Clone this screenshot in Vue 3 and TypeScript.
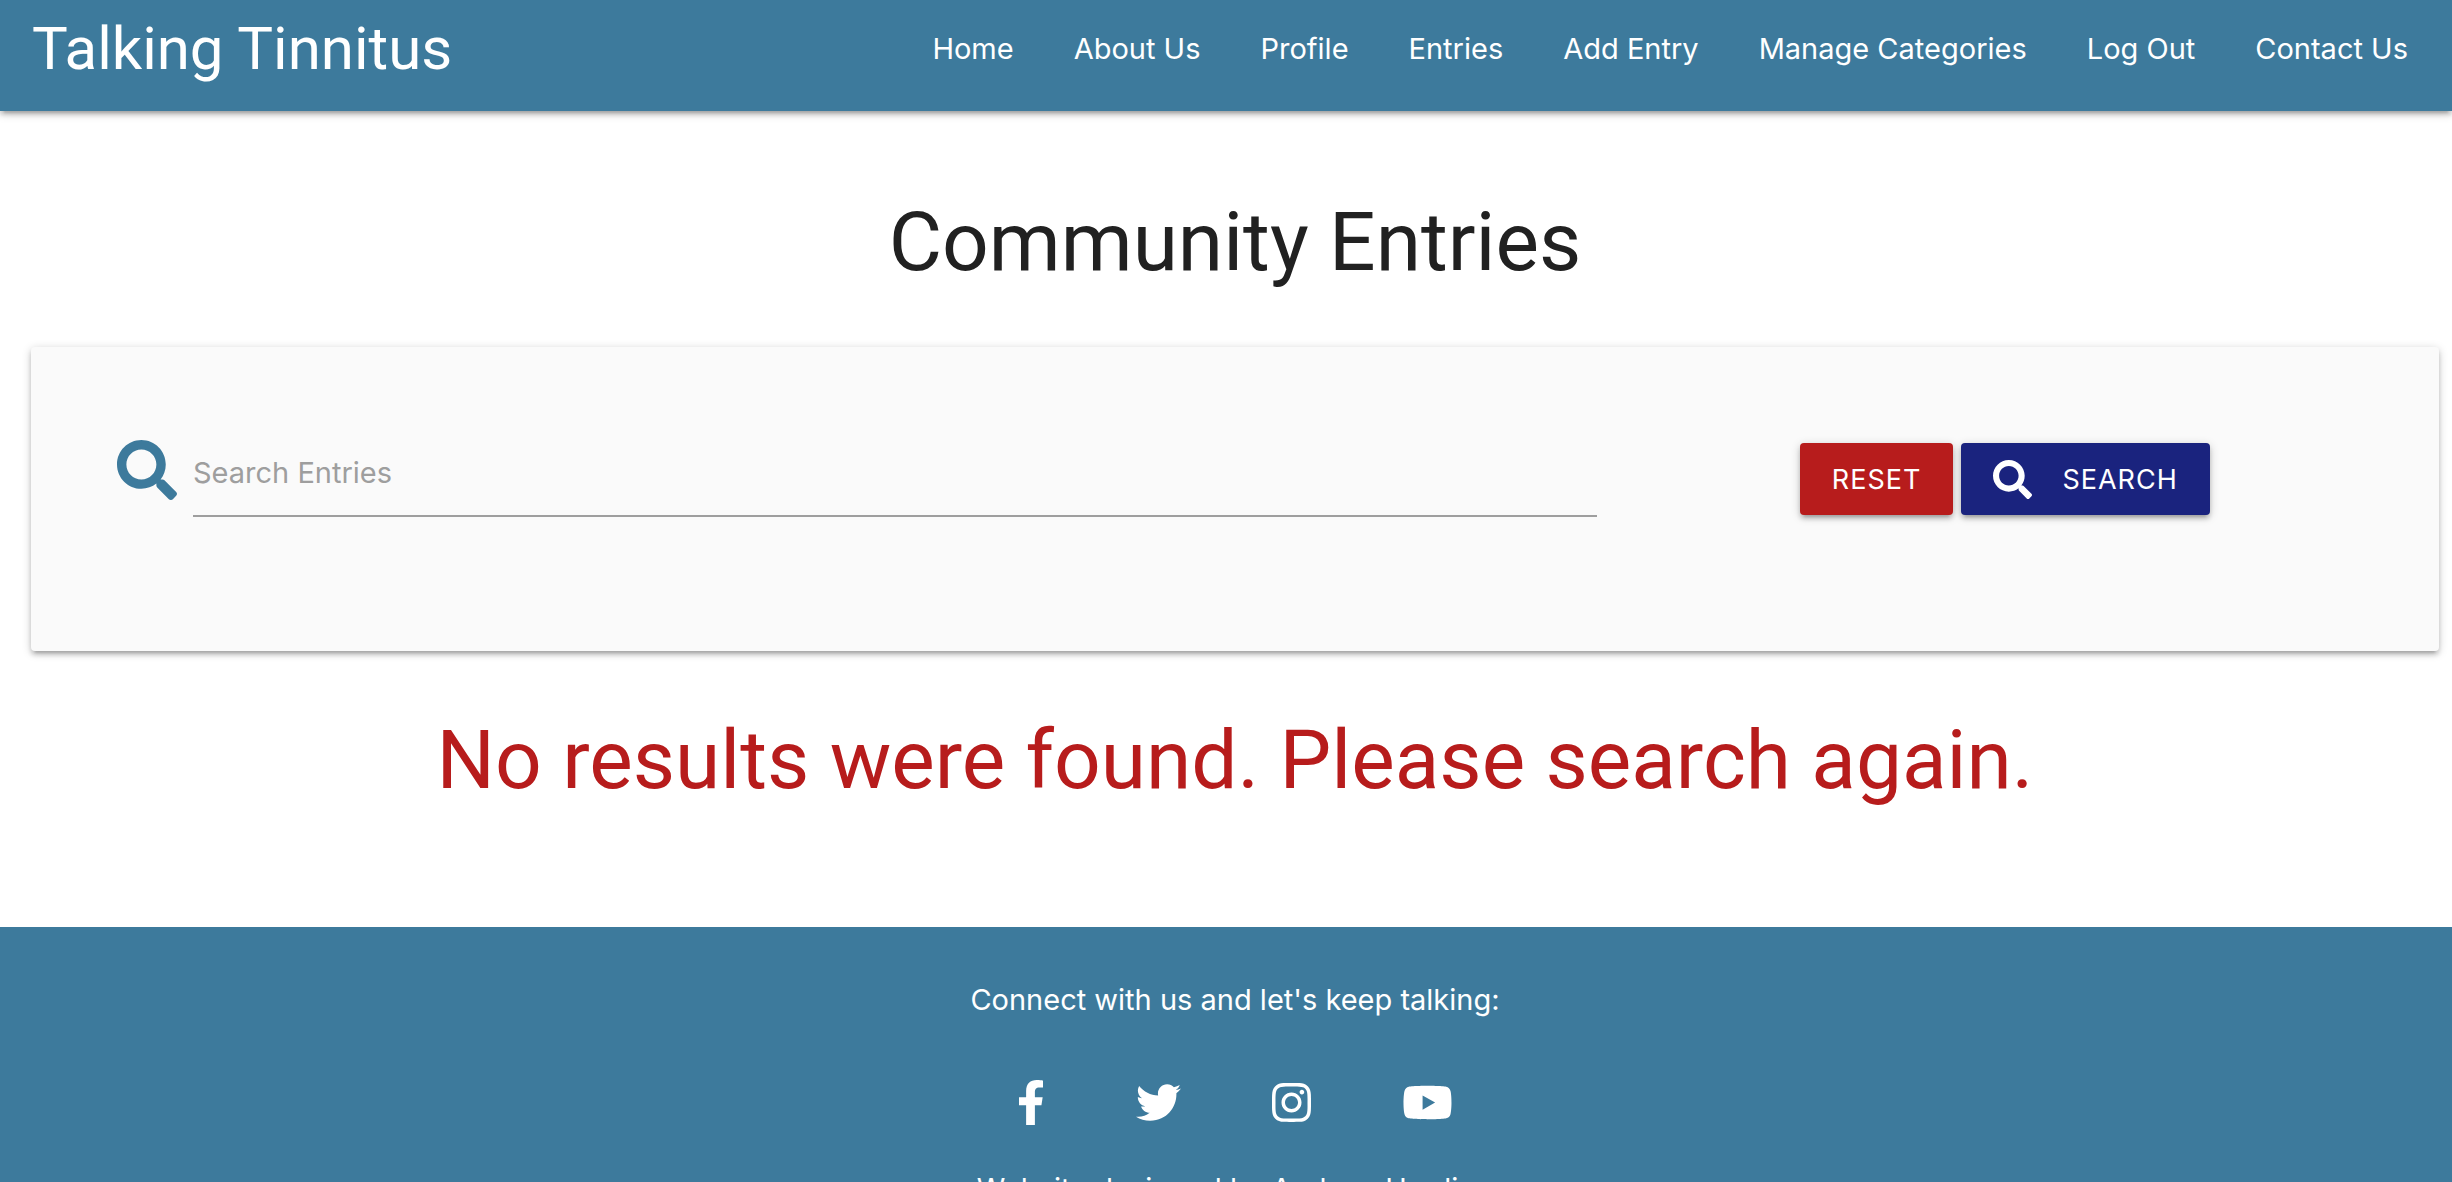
<script setup lang="ts">
import { ref } from 'vue'

interface SocialLink {
  name: string
  width: number
  viewBox: string
  path: string
}

const query = ref('')

const links: string[] = [
  'Home',
  'About Us',
  'Profile',
  'Entries',
  'Add Entry',
  'Manage Categories',
  'Log Out',
  'Contact Us',
]

const searchPath =
  'M505 442.7L405.3 343c-4.500-4.500-10.600-7-17-7H372c27.600-35.300 44-79.700 44-128C416 93.100 322.900 0 208 0S0 93.100 0 208s93.100 208 208 208c48.300 0 92.700-16.400 128-44v16.300c0 6.400 2.500 12.500 7 17l99.700 99.700c9.400 9.400 24.600 9.400 33.900 0l28.300-28.300c9.400-9.400 9.400-24.600.1-34zM208 336c-70.700 0-128-57.200-128-128 0-70.700 57.200-128 128-128 70.700 0 128 57.200 128 128 0 70.700-57.200 128-128 128z'

const socials: SocialLink[] = [
  {
    name: 'Facebook',
    width: 28,
    viewBox: '0 0 320 512',
    path: 'M279.14 288l14.22-92.66h-88.91v-60.13c0-25.35 12.42-50.06 52.24-50.06h40.42V6.26S260.43 0 225.36 0c-73.22 0-121.08 44.38-121.08 124.72v70.62H22.89V288h81.39v224h100.17V288z',
  },
  {
    name: 'Twitter',
    width: 45,
    viewBox: '0 0 512 512',
    path: 'M459.37 151.716c.325 4.548.325 9.097.325 13.645 0 138.72-105.583 298.558-298.558 298.558-59.452 0-114.680-17.219-161.137-47.106 8.447.974 16.568 1.299 25.340 1.299 49.055 0 94.213-16.568 130.274-44.832-46.132-.975-84.792-31.188-98.112-72.772 6.498.974 12.995 1.624 19.818 1.624 9.421 0 18.843-1.300 27.614-3.573-48.081-9.747-84.143-51.980-84.143-102.985v-1.299c13.969 7.797 30.214 12.670 47.431 13.319-28.264-18.843-46.781-51.005-46.781-87.391 0-19.492 5.197-37.360 14.294-52.954 51.655 63.675 129.300 105.258 216.365 109.807-1.624-7.797-2.599-15.918-2.599-24.040 0-57.828 46.782-104.934 104.934-104.934 30.213 0 57.502 12.670 76.670 33.137 23.715-4.548 46.456-13.320 66.599-25.340-7.798 24.366-24.366 44.833-46.132 57.827 21.117-2.273 41.584-8.122 60.426-16.243-14.292 20.791-32.161 39.308-52.628 54.253z',
  },
  {
    name: 'Instagram',
    width: 39,
    viewBox: '0 0 448 512',
    path: 'M224.1 141c-63.600 0-114.900 51.300-114.900 114.900s51.300 114.900 114.900 114.900S339 319.500 339 255.900 287.700 141 224.100 141zm0 189.600c-41.100 0-74.700-33.500-74.700-74.700s33.500-74.700 74.700-74.700 74.700 33.500 74.700 74.700-33.600 74.700-74.700 74.700zm146.400-194.300c0 14.900-12 26.800-26.800 26.800-14.900 0-26.800-12-26.800-26.800s12-26.800 26.800-26.800 26.800 12 26.800 26.800zm76.100 27.200c-1.700-35.900-9.900-67.700-36.200-93.900-26.200-26.200-58-34.400-93.900-36.200-37-2.100-147.900-2.100-184.900 0-35.800 1.700-67.600 9.900-93.900 36.100s-34.400 58-36.200 93.900c-2.100 37-2.100 147.900 0 184.900 1.700 35.900 9.900 67.700 36.200 93.900s58 34.400 93.900 36.200c37 2.100 147.900 2.100 184.900 0 35.900-1.700 67.700-9.900 93.900-36.200 26.200-26.200 34.400-58 36.200-93.900 2.100-37 2.100-147.800 0-184.800zM398.800 388c-7.800 19.600-22.900 34.700-42.600 42.600-29.500 11.700-99.500 9-132.100 9s-102.700 2.600-132.100-9c-19.600-7.800-34.700-22.900-42.600-42.600-11.700-29.500-9-99.500-9-132.100s-2.600-102.700 9-132.100c7.800-19.600 22.900-34.700 42.600-42.600 29.500-11.700 99.500-9 132.100-9s102.700-2.600 132.100 9c19.600 7.800 34.700 22.900 42.600 42.600 11.700 29.500 9 99.500 9 132.100s2.700 102.700-9 132.100z',
  },
  {
    name: 'YouTube',
    width: 51,
    viewBox: '0 0 576 512',
    path: 'M549.655 124.083c-6.281-23.650-24.787-42.276-48.284-48.597C458.781 64 288 64 288 64S117.220 64 74.629 75.486c-23.497 6.322-42.003 24.947-48.284 48.597-11.412 42.867-11.412 132.305-11.412 132.305s0 89.438 11.412 132.305c6.281 23.650 24.787 41.500 48.284 47.821C117.220 448 288 448 288 448s170.780 0 213.371-11.486c23.497-6.321 42.003-24.171 48.284-47.821 11.412-42.867 11.412-132.305 11.412-132.305s0-89.438-11.412-132.305zm-317.510 213.508V175.185l142.739 81.205-142.739 81.201z',
  },
]

function reset(): void {
  query.value = ''
}
</script>

<template>
  <div class="page">
    <nav class="navbar">
      <a class="brand" href="#">Talking Tinnitus</a>
      <ul class="links">
        <li v-for="link in links" :key="link"><a href="#">{{ link }}</a></li>
      </ul>
    </nav>

    <main class="content">
      <h1 class="title">Community Entries</h1>
      <form class="card" @submit.prevent>
        <div class="field">
          <label for="query" aria-label="Search">
            <svg class="field-icon" viewBox="0 0 512 512" aria-hidden="true"><path :d="searchPath" /></svg>
          </label>
          <input id="query" v-model="query" type="text" placeholder="Search Entries" />
        </div>
        <div class="actions">
          <button class="btn reset" type="button" @click="reset">RESET</button>
          <button class="btn search" type="submit">
            <svg class="btn-icon" viewBox="0 0 512 512" aria-hidden="true"><path :d="searchPath" /></svg>
            SEARCH
          </button>
        </div>
      </form>
      <h2 class="message">No results were found. Please search again.</h2>
    </main>

    <footer class="footer">
      <p>Connect with us and let's keep talking:</p>
      <div class="socials">
        <a v-for="social in socials" :key="social.name" href="#" :aria-label="social.name">
          <svg :width="social.width" height="45" :viewBox="social.viewBox" aria-hidden="true">
            <path :d="social.path" />
          </svg>
        </a>
      </div>
      <p>Website designed by Andrew Harding</p>
    </footer>
  </div>
</template>

<style>
body {
  margin: 0;
}
</style>

<style scoped>
.page {
  height: 100vh;
  overflow: hidden;
  background: #fff;
  color: #212121;
  font-family: Inter, "Liberation Sans", sans-serif;
  font-size: 29px;
  line-height: 44px;
}

.page * {
  box-sizing: border-box;
}

svg {
  display: block;
  fill: currentColor;
}

a {
  color: inherit;
  text-decoration: none;
}

.navbar {
  display: flex;
  justify-content: space-between;
  height: 111px;
  padding: 0 14px 0 32px;
  background: #3d7a9c;
  color: #fff;
  line-height: 98px;
  white-space: nowrap;
  box-shadow: 0 4px 4px 0 rgba(0, 0, 0, 0.14), 0 6px 2px -4px rgba(0, 0, 0, 0.12), 0 2px 10px 0 rgba(0, 0, 0, 0.2);
}

.brand {
  font-family: Roboto, "Liberation Sans", sans-serif;
  font-size: 60px;
}

.links {
  display: flex;
  margin: 0;
  padding: 0;
  list-style: none;
}

.links a {
  display: block;
  padding: 0 30px;
}

.content {
  padding: 0 13px 0 31px;
}

.title,
.message {
  margin: 0;
  font-family: Roboto, "Liberation Sans", sans-serif;
  font-size: 82px;
  font-weight: 400;
  line-height: 96px;
  text-align: center;
}

.title {
  padding: 83px 0 57px;
}

.message {
  padding: 61px 0 119px;
  color: #b71c1c;
}

.card {
  display: grid;
  grid-template-columns: 29fr 16fr;
  align-items: start;
  padding: 80px 26px 134px 86px;
  border-radius: 4px;
  background: #fafafa;
  box-shadow: 0 4px 4px 0 rgba(0, 0, 0, 0.14), 0 6px 2px -4px rgba(0, 0, 0, 0.12), 0 2px 10px 0 rgba(0, 0, 0, 0.2);
}

.field {
  display: flex;
  gap: 16px;
}

.field-icon {
  width: 60px;
  height: 60px;
  margin-top: 13px;
  color: #3d7a9c;
}

.field input {
  flex: 1;
  min-width: 0;
  height: 90px;
  padding: 2px 0 0;
  border: 0;
  border-bottom: 2px solid #9e9e9e;
  border-radius: 0;
  outline: 0;
  background: transparent;
  color: inherit;
  font: inherit;
}

.field input::placeholder {
  color: #9e9e9e;
  opacity: 1;
}

.actions {
  display: flex;
  justify-content: center;
  gap: 8px;
  padding-top: 16px;
}

.btn {
  display: flex;
  align-items: center;
  height: 72px;
  padding: 0 32px;
  border: 0;
  border-radius: 4px;
  color: #fff;
  font-family: inherit;
  font-size: 27px;
  letter-spacing: 1px;
  box-shadow: 0 4px 4px 0 rgba(0, 0, 0, 0.14), 0 6px 2px -4px rgba(0, 0, 0, 0.12), 0 2px 10px 0 rgba(0, 0, 0, 0.2);
}

.reset {
  background: #b71c1c;
}

.search {
  gap: 30px;
  background: #1a237e;
}

.btn-icon {
  width: 39px;
  height: 39px;
}

.footer {
  padding: 51px 0 30px 18px;
  background: #3d7a9c;
  color: #fff;
  text-align: center;
}

.footer p {
  margin: 0;
}

.socials {
  display: flex;
  justify-content: center;
  gap: 91px;
  padding: 58px 0 42px;
}
</style>
